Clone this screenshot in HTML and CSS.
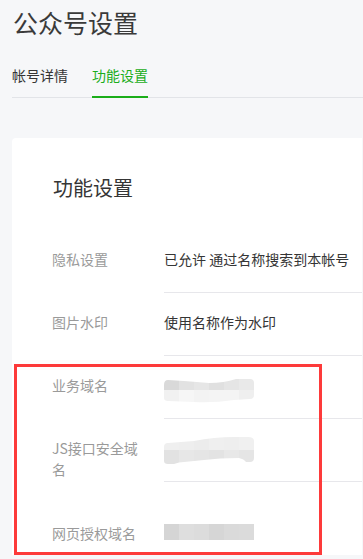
FILE: index.html
```html
<!DOCTYPE html>
<html lang="zh-CN">
<head>
<meta charset="utf-8">
<title>公众号设置</title>
<link rel="stylesheet" href="styles.css">
</head>
<body>
<div class="page">
  <h1 class="title">公众号设置</h1>
  <nav class="tabs">
    <a class="tab">帐号详情</a>
    <a class="tab tab-active">功能设置</a>
  </nav>
  <section class="card">
    <h2 class="card-title">功能设置</h2>
    <div class="row">
      <div class="label">隐私设置</div>
      <div class="value">已允许 通过名称搜索到本帐号</div>
    </div>
    <div class="row">
      <div class="label">图片水印</div>
      <div class="value">使用名称作为水印</div>
    </div>
    <div class="row">
      <div class="label">业务域名</div>
      <div class="value">
        <svg class="blob blob-a" width="90" height="24" viewBox="0 0 90 24">
          <defs><clipPath id="ca"><path d="M4,1 Q0,1 0,6 L0,19 Q0,22 4,22 L30,23 Q50,24 70,21 L86,20 Q90,20 90,16 L90,4 Q90,0 86,0 L72,0 Q60,4 45,4 L20,2 Z"/></clipPath></defs>
          <g clip-path="url(#ca)">
            <rect x="0" y="0" width="15" height="11" fill="#d9d9d9"/>
            <rect x="15" y="0" width="15" height="11" fill="#e2e2e2"/>
            <rect x="30" y="0" width="15" height="11" fill="#e6e6e6"/>
            <rect x="45" y="0" width="15" height="11" fill="#e0e0e0"/>
            <rect x="60" y="0" width="15" height="11" fill="#e5e5e5"/>
            <rect x="75" y="0" width="15" height="11" fill="#e9e9e9"/>
            <rect x="0" y="11" width="15" height="13" fill="#f1f1f1"/>
            <rect x="15" y="11" width="15" height="13" fill="#f6f6f6"/>
            <rect x="30" y="11" width="15" height="13" fill="#f3f3f3"/>
            <rect x="45" y="11" width="15" height="13" fill="#f4f4f4"/>
            <rect x="60" y="11" width="15" height="13" fill="#f4f4f4"/>
            <rect x="75" y="11" width="15" height="13" fill="#efefef"/>
          </g>
        </svg>
      </div>
    </div>
    <div class="row">
      <div class="label">JS接口安全域名</div>
      <div class="value">
        <svg class="blob blob-b" width="90" height="28" viewBox="0 0 90 28">
          <defs><clipPath id="cb"><path d="M4,6 Q0,6 0,10 L0,24 Q0,27 4,27 L10,27 Q15,25 20,25 L40,23 Q55,21 75,21 Q80,22 82,25 L86,25 Q90,25 90,21 L90,4 Q90,0 84,0 L70,0 Q50,0 30,4 Z"/></clipPath></defs>
          <g clip-path="url(#cb)">
            <rect x="0" y="0" width="15" height="13" fill="#efefef"/>
            <rect x="15" y="0" width="15" height="13" fill="#eeeeee"/>
            <rect x="30" y="0" width="15" height="13" fill="#ececec"/>
            <rect x="45" y="0" width="15" height="13" fill="#efefef"/>
            <rect x="60" y="0" width="15" height="13" fill="#eeeeee"/>
            <rect x="75" y="0" width="15" height="13" fill="#f0f0f0"/>
            <rect x="0" y="13" width="15" height="15" fill="#e2e2e2"/>
            <rect x="15" y="13" width="15" height="15" fill="#e7e7e7"/>
            <rect x="30" y="13" width="15" height="15" fill="#e5e5e5"/>
            <rect x="45" y="13" width="15" height="15" fill="#e3e3e3"/>
            <rect x="60" y="13" width="15" height="15" fill="#e8e8e8"/>
            <rect x="75" y="13" width="15" height="15" fill="#e5e5e5"/>
          </g>
        </svg>
      </div>
    </div>
    <div class="row row-last">
      <div class="label">网页授权域名</div>
      <div class="value">
        <svg class="blob blob-c" width="90" height="16" viewBox="0 0 90 16">
          <rect x="0" y="0" width="15" height="16" fill="#d5d5d5"/>
          <rect x="15" y="0" width="15" height="16" fill="#dedede"/>
          <rect x="30" y="0" width="15" height="16" fill="#dcdcdc"/>
          <rect x="45" y="0" width="15" height="16" fill="#d6d6d6"/>
          <rect x="60" y="0" width="15" height="16" fill="#dadada"/>
          <rect x="75" y="0" width="15" height="16" fill="#dbdbdb"/>
        </svg>
      </div>
    </div>
  </section>
  <div class="highlight"></div>
</div>
</body>
</html>
```
FILE: styles.css
```css
* { box-sizing: border-box; }
html, body {
  margin: 0;
  padding: 0;
  background: #f6f7f9;
}
body {
  font-family: "Noto Sans CJK SC", "Noto Sans", sans-serif;
  color: #353535;
  overflow: hidden;
}
.page {
  position: relative;
  height: 559px;
}
.title {
  margin: 0;
  padding-left: 13px;
  font-size: 25px;
  font-weight: 400;
  line-height: 44px;
  height: 45px;
  color: #3a3a3a;
}
.tabs {
  display: flex;
  margin-left: 12px;
  border-bottom: 1px solid #e2e4e8;
}
.tab {
  display: block;
  font-size: 14px;
  line-height: 22px;
  padding: 19px 0 10px;
  margin-right: 24px;
  margin-bottom: -1px;
  border-bottom: 2px solid transparent;
  color: #353535;
}
.tab-active {
  color: #1aad19;
  border-bottom-color: #1aad19;
}
.card {
  margin: 40px 0 0 12px;
  width: 350px;
  background: #fff;
  border-radius: 4px 0 0 0;
}
.card-title {
  margin: 0;
  padding: 35px 0 27px 41px;
  font-size: 20px;
  font-weight: 400;
  line-height: 30px;
  color: #353535;
}
.row {
  display: flex;
  align-items: flex-start;
  height: 63px;
  padding-left: 40px;
  font-size: 14px;
}
.label {
  width: 90px;
  margin-right: 22px;
  padding-top: 19px;
  line-height: 21px;
  color: #9a9a9a;
  flex-shrink: 0;
}
.value {
  flex: 1;
  height: 63px;
  padding-top: 19px;
  line-height: 21px;
  border-bottom: 1px solid #e7e7eb;
  color: #353535;
  white-space: nowrap;
}
.blob { display: block; }
.blob-a { margin-top: 4px; }
.blob-b { margin-top: -1px; }
.blob-c { margin-top: 1px; }
.row-last {
  height: 73px;
}
.row-last .label,
.row-last .value {
  padding-top: 41px;
}
.row-last .value {
  height: 73px;
  border-bottom: none;
}
.highlight {
  position: absolute;
  left: 14px;
  top: 364px;
  width: 308px;
  height: 191px;
  border: 3px solid #fd3a3a;
}
```
